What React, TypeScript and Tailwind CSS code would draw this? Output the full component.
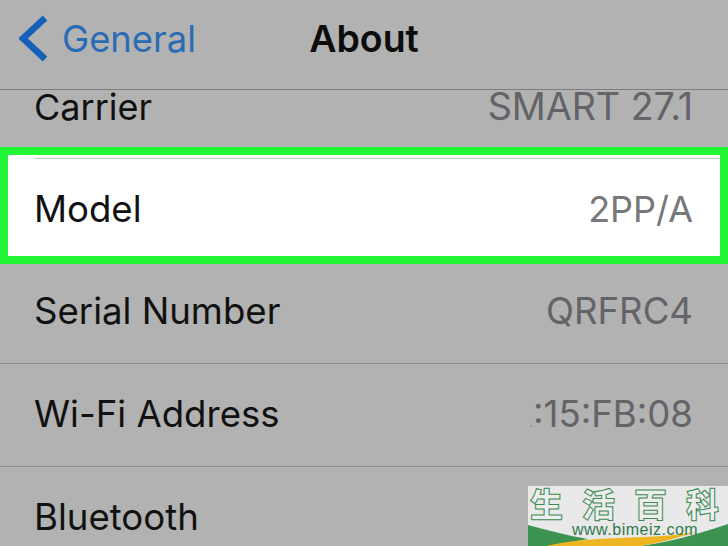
const font = "font-['Inter','Liberation_Sans',sans-serif]";

function Row({ label, value, height, offset, line = true }: { label: string; value: React.ReactNode; height: string; offset: string; line?: boolean }) {
  return (
    <div className={`flex items-center justify-between pl-[34px] pr-[35px] ${height} ${offset} ${line ? "border-b border-[#8f8f8f]" : ""}`}>
      <span className="text-[36.6px] leading-none text-[#111111]">{label}</span>
      <span className="text-[36.6px] leading-none text-[#636368]">{value}</span>
    </div>
  );
}

function Watermark() {
  return (
    <div className="absolute bottom-0 right-0 w-[200px] h-[60px] bg-[#e9e9e9]">
      <svg className="absolute left-0 top-0" width="200" height="60" viewBox="0 0 200 60">
        <path d="M0 39 C20 44 40 50 60 53 L22 60 L0 60 Z" fill="#3d9350" />
        <path d="M112 60 C135 57 165 50 200 38 L200 60 Z" fill="#3d9350" />
        <path d="M18 60 C40 55 60 53 90 52 C120 51 145 50 168 46 C150 52 130 57 112 60 Z" fill="#eeb522" />
      </svg>
      <div className="relative flex pl-[2px] gap-[19px] text-[33px] leading-[35px] font-black text-[#eeeeee] font-['Noto_Sans_CJK_SC',sans-serif] [-webkit-text-stroke:1px_#3b8a52]">
        <span>生</span>
        <span>活</span>
        <span>百</span>
        <span>科</span>
      </div>
      <span className="absolute left-[44px] top-[35px] text-[16px] leading-[18px] tracking-[0.5px] text-[#2f7a4c] font-['Liberation_Sans',sans-serif]">www.bimeiz.com</span>
    </div>
  );
}

export default function App() {
  return (
    <div className={`relative w-[728px] h-[546px] overflow-hidden bg-[#b2b2b2] ${font}`}>
      <div className="relative flex items-center justify-center h-[90px] border-b border-[#7f7f7f]">
        <div className="absolute left-[19px] top-[15px] flex items-center gap-[14px]">
          <svg width="29" height="48" viewBox="0 0 29 48">
            <path d="M26 3 L4 23.5 L26 44" fill="none" stroke="#1560b9" strokeWidth="6.5" />
          </svg>
          <span className="text-[36.4px] leading-none text-[#2a6cb4]">General</span>
        </div>
        <span className="text-[37.5px] font-semibold leading-none text-[#0c0c0c] -translate-y-[6px]">About</span>
      </div>

      <div className="flex items-start justify-between pl-[34px] pr-[35px] h-[57px]">
        <span className="text-[36px] leading-[36px] text-[#111111] mt-[-1px]">Carrier</span>
        <span className="text-[37.6px] leading-[36px] text-[#636368] mt-[-1px]">SMART 27.1</span>
      </div>

      <div className="h-[117px] border-[8px] border-[#22f536] bg-white">
        <div className="ml-[27px] mt-[3px] h-px bg-[#c4c4cc]" />
        <div className="flex items-center justify-between pl-[26px] pr-[27px] pt-[2px] h-[98px]">
          <span className="text-[36.6px] leading-none text-[#111111]">Model</span>
          <span className="text-[36px] leading-none text-[#77777c]">2PP/A</span>
        </div>
      </div>

      <div>
        <Row label="Serial Number" value="QRFRC4" height="h-[100px]" offset="pb-[4px]" />
        <Row
          label="Wi-Fi Address"
          value={
            <>
              <span className="text-[14px] text-[#8f8f8f]">.</span>:15:FB:08
            </>
          }
          height="h-[103px]"
          offset="pb-[1px]"
        />
        <Row label="Bluetooth" value="" height="h-[102px]" offset="pb-[2px]" line={false} />
      </div>

      <Watermark />
    </div>
  );
}
